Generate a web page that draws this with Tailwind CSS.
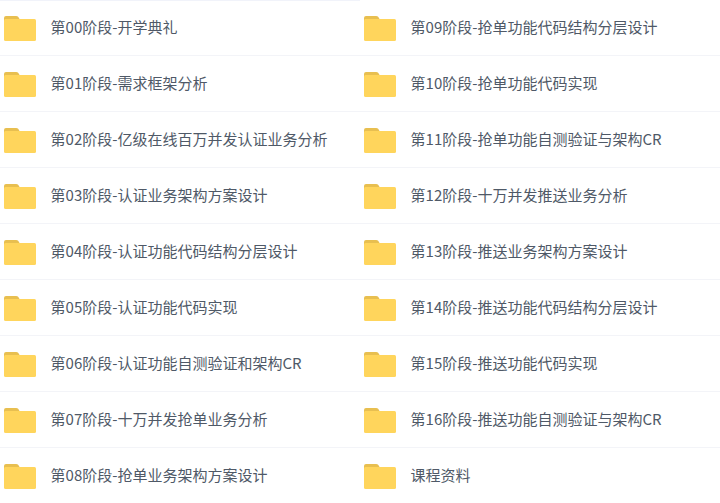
<!DOCTYPE html>
<html lang="zh-CN">
<head>
    <meta charset="UTF-8">
    <title>课程目录</title>
    <script src="https://cdn.jsdelivr.net/npm/@tailwindcss/browser@4"></script>
</head>
<body class="bg-white overflow-hidden font-['Noto_Sans_CJK_SC',sans-serif]">
    <svg class="hidden">
        <symbol id="folder" viewBox="0 0 32 26">
            <path d="M0 3a2 2 0 0 1 2-2h10a3 3 0 0 1 3 2l1 2v6H0z" fill="#e8bf50"/>
            <rect y="4" width="32" height="22" rx="1.5" fill="#ffd55c"/>
        </symbol>
    </svg>

    <div class="h-px -mb-px w-[360px] bg-[#f1f3fa]"></div>
    <div id="list" class="grid grid-cols-[360px_360px] grid-flow-col grid-rows-9"></div>

    <script>
        const names = [
            '第00阶段-开学典礼',
            '第01阶段-需求框架分析',
            '第02阶段-亿级在线百万并发认证业务分析',
            '第03阶段-认证业务架构方案设计',
            '第04阶段-认证功能代码结构分层设计',
            '第05阶段-认证功能代码实现',
            '第06阶段-认证功能自测验证和架构CR',
            '第07阶段-十万并发抢单业务分析',
            '第08阶段-抢单业务架构方案设计',
            '第09阶段-抢单功能代码结构分层设计',
            '第10阶段-抢单功能代码实现',
            '第11阶段-抢单功能自测验证与架构CR',
            '第12阶段-十万并发推送业务分析',
            '第13阶段-推送业务架构方案设计',
            '第14阶段-推送功能代码结构分层设计',
            '第15阶段-推送功能代码实现',
            '第16阶段-推送功能自测验证与架构CR',
            '课程资料'
        ];

        document.getElementById('list').innerHTML = names.map(name => `
            <div class="flex items-center h-14 pl-1 border-b border-[#f3f4f8]">
                <svg class="w-8 h-[26px] shrink-0"><use href="#folder"></use></svg>
                <span class="ml-[14.6px] text-[15px] text-[#4f5967]">${name}</span>
            </div>
        `).join('');
    </script>
</body>
</html>
